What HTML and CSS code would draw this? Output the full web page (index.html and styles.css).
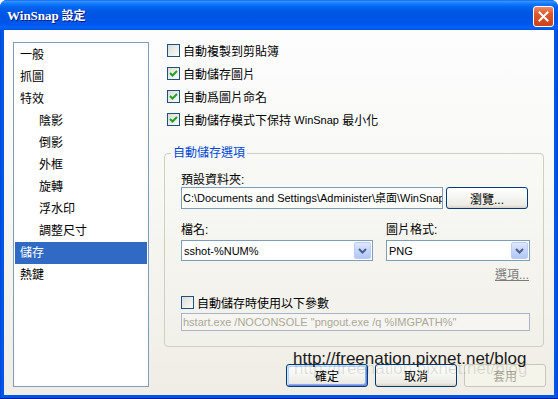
FILE: index.html
```html
<!DOCTYPE html>
<html lang="zh-Hant">
<head>
    <meta charset="UTF-8">
    <title>WinSnap 設定</title>
    <link rel="stylesheet" href="styles.css">
</head>
<body>
    <div class="window">
        <div class="titlebar">
            <span class="title"><span class="title-latin">WinSnap</span> 設定</span>
            <button type="button" class="close" aria-label="關閉">
                <svg width="11" height="11" viewBox="0 0 11 11"><path d="M1.5 1.5 L9.5 9.5 M9.5 1.5 L1.5 9.5" stroke="#fff" stroke-width="2" stroke-linecap="square"/></svg>
            </button>
        </div>
        <div class="frame">
            <div class="client">
                <ul class="nav">
                    <li>一般</li>
                    <li>抓圖</li>
                    <li>特效</li>
                    <li class="sub">陰影</li>
                    <li class="sub">倒影</li>
                    <li class="sub">外框</li>
                    <li class="sub">旋轉</li>
                    <li class="sub">浮水印</li>
                    <li class="sub">調整尺寸</li>
                    <li class="selected">儲存</li>
                    <li>熱鍵</li>
                </ul>

                <div class="page">
                    <div class="checks">
                        <label class="check"><span class="box"></span>自動複製到剪貼簿</label>
                        <label class="check"><span class="box"><svg width="9" height="9" viewBox="0 0 9 9"><path d="M1 4 L3.5 6.5 L8 2" fill="none" stroke="#21a121" stroke-width="2"/></svg></span>自動儲存圖片</label>
                        <label class="check"><span class="box"><svg width="9" height="9" viewBox="0 0 9 9"><path d="M1 4 L3.5 6.5 L8 2" fill="none" stroke="#21a121" stroke-width="2"/></svg></span>自動爲圖片命名</label>
                        <label class="check"><span class="box"><svg width="9" height="9" viewBox="0 0 9 9"><path d="M1 4 L3.5 6.5 L8 2" fill="none" stroke="#21a121" stroke-width="2"/></svg></span>自動儲存模式下保持&nbsp;<span class="latin">WinSnap</span>&nbsp;最小化</label>
                    </div>

                    <fieldset class="group">
                        <legend>自動儲存選項</legend>

                        <div class="field-label first">預設資料夾:</div>
                        <div class="path-row">
                            <div class="textbox">C:\Documents and Settings\Administer\桌面\WinSnap</div>
                            <button type="button" class="btn browse">瀏覽...</button>
                        </div>

                        <div class="combo-grid">
                            <div class="field-label">檔名:</div>
                            <div class="field-label">圖片格式:</div>
                            <div class="combo">
                                <span class="value">sshot-%NUM%</span>
                                <span class="arrow"><svg width="9" height="6" viewBox="0 0 9 6"><path d="M1 1 L4.5 4.5 L8 1" fill="none" stroke="#4d6185" stroke-width="2"/></svg></span>
                            </div>
                            <div class="combo">
                                <span class="value">PNG</span>
                                <span class="arrow"><svg width="9" height="6" viewBox="0 0 9 6"><path d="M1 1 L4.5 4.5 L8 1" fill="none" stroke="#4d6185" stroke-width="2"/></svg></span>
                            </div>
                        </div>

                        <div class="options-link"><span>選項...</span></div>

                        <label class="check param"><span class="box"></span>自動儲存時使用以下參數</label>
                        <div class="textbox disabled">hstart.exe /NOCONSOLE "pngout.exe /q %IMGPATH%"</div>
                    </fieldset>

                    <div class="buttons">
                        <button type="button" class="btn default">確定</button>
                        <button type="button" class="btn">取消</button>
                        <button type="button" class="btn" disabled>套用</button>
                    </div>
                </div>
            </div>
        </div>
        <div class="watermark">http://freenation.pixnet.net/blog</div>
    </div>
</body>
</html>
```

FILE: styles.css
```css
* {
    box-sizing: border-box;
}
body {
    margin: 0;
    background: #fff;
    font-family: "Liberation Sans", "Noto Sans CJK TC", sans-serif;
    font-size: 12px;
    color: #000;
}
.window {
    position: relative;
    width: 558px;
    height: 399px;
    background: #0831d9;
    border-radius: 7px 7px 0 0;
    overflow: hidden;
}
.titlebar {
    height: 30px;
    display: flex;
    align-items: center;
    justify-content: space-between;
    padding: 0 4px 0 7px;
    background: linear-gradient(to bottom, #0058ee 0, #3d95ff 1px, #2a8cff 2px, #0f78fb 4px, #0265f0 7px, #0058e6 11px, #0054e3 17px, #0056ea 23px, #005cf3 26px, #0064f8 28px, #0050d8 30px);
}
.title {
    color: #fff;
    font-weight: bold;
    font-size: 12px;
    text-shadow: 1px 1px 0 #0a1883;
    font-family: "Noto Sans CJK TC", sans-serif;
}
.title-latin {
    font-family: "Liberation Serif", serif;
    font-size: 13px;
}
.close {
    width: 21px;
    height: 21px;
    margin-top: 2px;
    padding: 0;
    display: flex;
    align-items: center;
    justify-content: center;
    border: 1px solid #fff;
    border-radius: 3px;
    background: linear-gradient(to bottom, #eb8a68, #e0592f 35%, #d44a1f 75%, #c9431a);
}
.frame {
    height: 369px;
    padding: 0 4px 4px;
    background: linear-gradient(to right, #0046d5, #0058ee 2px, #0055e5 4px, #0055e5 calc(100% - 4px), #0058ee calc(100% - 2px), #0040cf);
    box-shadow: inset 0 -1px 0 #001ea0;
}
.client {
    height: 365px;
    display: grid;
    grid-template-columns: 136px 382px;
    column-gap: 15px;
    padding: 12px 8px 8px 9px;
    background: linear-gradient(to bottom, #fdfdfe 0, #f8f8f5 40%, #f3f2ec 75%, #efede5 100%);
}

/* linke Liste */
.nav {
    list-style: none;
    margin: 0;
    padding: 1px;
    height: 345px;
    background: #fff;
    border: 1px solid #7f9db9;
}
.nav li {
    height: 22px;
    line-height: 22px;
    padding-left: 5px;
}
.nav li.sub {
    padding-left: 24px;
}
.nav li.selected {
    background: #316ac5;
    color: #fff;
}

/* rechte Seite */
.page {
    display: flex;
    flex-direction: column;
    height: 345px;
}
.checks {
    margin-top: -3px;
    padding-left: 3px;
}
.check {
    display: flex;
    align-items: center;
    height: 23px;
}
.box {
    width: 13px;
    height: 13px;
    margin-right: 3px;
    display: flex;
    align-items: center;
    justify-content: center;
    border: 1px solid #1c5180;
    background: linear-gradient(135deg, #dcdcd7, #fbfbf9);
}
.latin {
    font-size: 11px;
}
.group {
    margin: 15px 0 0;
    padding: 0 13px 15px 16px;
    min-width: 0;
    width: 380px;
    border: 1px solid #d0d0bf;
    border-radius: 4px;
}
.group legend {
    margin-left: -10px;
    padding: 0 2px;
    line-height: 14px;
    color: #0046d5;
}
.field-label {
    line-height: 14px;
}
.field-label.first {
    margin-top: 13px;
}
.path-row {
    display: flex;
    gap: 3px;
}
.textbox {
    width: 262px;
    height: 22px;
    border: 1px solid #7f9db9;
    background: #fff;
    padding: 0 1px;
    font-size: 11px;
    line-height: 20px;
    white-space: nowrap;
    overflow: hidden;
}
.textbox.disabled {
    width: 349px;
    height: 18px;
    line-height: 16px;
    margin-top: 4px;
    border-color: #a9b6c8;
    background: #f6f5f1;
    color: #aca899;
}
.btn {
    width: 82px;
    height: 23px;
    padding: 0;
    font-family: inherit;
    font-size: 12px;
    color: #000;
    border: 1px solid #003c74;
    border-radius: 3px;
    background: linear-gradient(to bottom, #fff, #f6f6f2 45%, #ecebe5 85%, #d8d2c6);
}
.btn.browse {
    height: 22px;
}
.btn.default {
    box-shadow: inset 1px 1px 0 #cee7ff, inset -1px -1px 0 #6982ee, inset 2px 2px 0 #bcd4f6, inset -2px -2px 0 #89ade4;
}
.btn:disabled {
    border-color: #c9c7ba;
    color: #aca899;
    background: #f5f4ea;
}
.combo-grid {
    display: grid;
    grid-template-columns: 192px 144px;
    column-gap: 13px;
    row-gap: 3px;
    margin-top: 14px;
}
.combo {
    display: flex;
    align-items: center;
    height: 21px;
    padding: 1px;
    border: 1px solid #7f9db9;
    background: #fff;
}
.combo .value {
    flex: 1;
    padding-left: 1px;
    font-size: 11px;
}
.combo .arrow {
    width: 17px;
    height: 17px;
    display: flex;
    align-items: center;
    justify-content: center;
    border: 1px solid #bccdf4;
    border-radius: 2px;
    background: linear-gradient(to bottom, #dde7fe, #c6d5fb 50%, #b3c7f6);
}
.options-link {
    margin-top: 7px;
    line-height: 14px;
    text-align: right;
    padding-right: 1px;
    color: #7b7b7b;
    text-decoration: underline;
}
.check.param {
    height: 14px;
    margin-top: 13px;
}
.buttons {
    margin-top: auto;
    display: flex;
    justify-content: flex-end;
    gap: 7px;
}

/* Wasserzeichen über dem Dialog */
.watermark {
    position: absolute;
    left: 293px;
    top: 349px;
    font-family: "Liberation Sans", sans-serif;
    font-size: 17px;
    line-height: 20px;
    color: #1a1a1a;
    text-shadow: 1px 10px 0 rgba(0, 0, 0, 0.12);
    white-space: nowrap;
}
```
